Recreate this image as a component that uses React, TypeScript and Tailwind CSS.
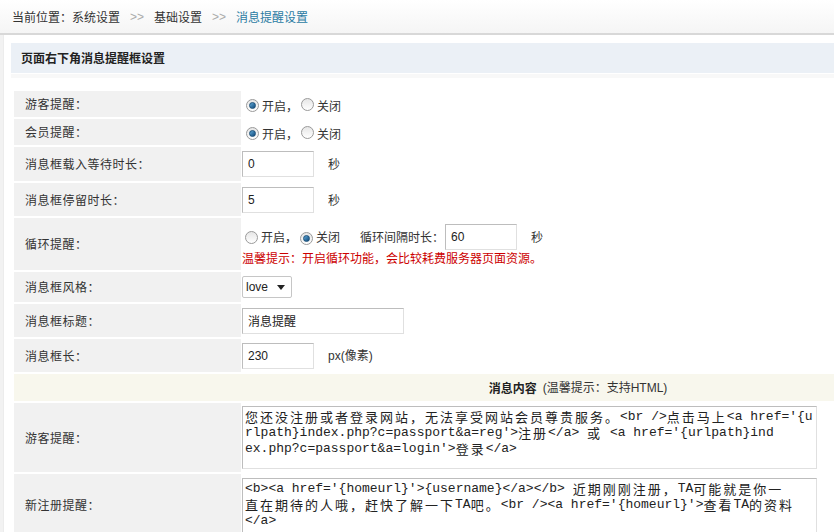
import type { ReactNode } from 'react'

const CJK = /([\u3000-\u303f\u4e00-\u9fff\uff00-\uffef]+)/

function Mixed({ text }: { text: string }) {
  return (
    <>
      {text.split(CJK).map((part, i) =>
        i % 2 ? (
          <span key={i} className="inline-block align-top h-[16px] text-[13px] tracking-[2px] leading-[16px] font-['Noto_Sans_CJK_SC',sans-serif]">
            {part}
          </span>
        ) : (
          <span key={i} className="inline-block align-top h-[16px] leading-[16px] whitespace-pre">
            {part}
          </span>
        )
      )}
    </>
  )
}

function Radio({ checked }: { checked?: boolean }) {
  return (
    <span className="inline-flex w-[13px] h-[13px] rounded-full border border-[#9a9a9a] bg-gradient-to-b from-[#e6e6e6] to-[#ffffff] items-center justify-center shrink-0">
      {checked && (
        <span className="w-[7px] h-[7px] rounded-full bg-gradient-to-br from-[#5fa8d8] to-[#0d4a7a] border border-[#1a4f78]" />
      )}
    </span>
  )
}

function TextBox({ value, className }: { value: string; className: string }) {
  return (
    <div
      className={`h-[26px] border border-[#bdbdbd] border-r-[#e0e0e0] border-b-[#e0e0e0] bg-white flex items-center px-[5px] text-[12px] text-[#222] font-['Liberation_Sans',sans-serif] ${className}`}
    >
      {value}
    </div>
  )
}

function Row({ label, h, children, top }: { label: string; h: string; children: ReactNode; top?: boolean }) {
  return (
    <div className={`flex ${h}`}>
      <div className="w-[227px] shrink-0 bg-[#f1f1f1] flex items-center pl-[11px] text-[12px] tracking-[0.5px] text-[#333]">
        {label}
      </div>
      <div className={`flex-1 flex ${top ? 'flex-col' : 'items-center'} pl-[1px] text-[12px] text-[#333]`}>
        {children}
      </div>
    </div>
  )
}

function OnOff({ on }: { on: boolean }) {
  return (
    <div className="flex items-center pl-[4px] pt-[3px]">
      <Radio checked={on} />
      <span className="ml-[3px]">开启，</span>
      <span className="ml-[3px]">
        <Radio checked={!on} />
      </span>
      <span className="ml-[3px]">关闭</span>
    </div>
  )
}

function Textarea({ lines, className }: { lines: string[]; className: string }) {
  return (
    <div
      className={`w-[575px] border border-[#bdbdbd] border-r-[#e0e0e0] border-b-[#e0e0e0] bg-white pt-[2px] pl-[2px] text-[13px] leading-[16px] text-[#222] font-['Liberation_Mono','Noto_Sans_CJK_SC',monospace] overflow-hidden ${className}`}
    >
      {lines.map((line, i) => (
        <div key={i} className="whitespace-nowrap h-[16px] leading-[16px]">
          <Mixed text={line} />
        </div>
      ))}
    </div>
  )
}

export default function App() {
  return (
    <div className="w-[834px] h-[532px] overflow-hidden bg-white font-['Noto_Sans_CJK_SC',sans-serif]">
      <div className="h-[35px] bg-gradient-to-b from-white to-[#f5f5f5] border-b-2 border-[#d8d8d8] flex items-center pl-[12px] text-[12px] text-[#333] w-[1200px]">
        <span>当前位置：系统设置</span>
        <span className="mx-[10px] text-[#aaa] font-['Liberation_Sans',sans-serif]">&gt;&gt;</span>
        <span>基础设置</span>
        <span className="mx-[10px] text-[#aaa] font-['Liberation_Sans',sans-serif]">&gt;&gt;</span>
        <span className="text-[#2a7ba3]">消息提醒设置</span>
      </div>

      <div className="flex w-[1200px]">
        <div className="w-[4px] bg-[#f2f2f2] border-r border-[#ececec] h-[500px] shrink-0" />
        <div className="flex-1 pl-[7px] pt-[8px]">
          <div className="h-[30px] bg-[#ebf0f6] flex items-center pl-[10px] text-[12px] font-bold text-[#222]">
            页面右下角消息提醒框设置
          </div>
          <div className="h-[4px] bg-[#f8f8f8] mt-[1px]" />

          <div className="ml-[3px] mt-[13px] w-[1128px] flex flex-col gap-[2px]">
            <Row label="游客提醒：" h="h-[26px]">
              <OnOff on />
            </Row>
            <Row label="会员提醒：" h="h-[26px]">
              <OnOff on />
            </Row>
            <Row label="消息框载入等待时长：" h="h-[34px]">
              <TextBox value="0" className="w-[72px]" />
              <span className="ml-[14px]">秒</span>
            </Row>
            <Row label="消息框停留时长：" h="h-[33px]">
              <TextBox value="5" className="w-[72px]" />
              <span className="ml-[14px]">秒</span>
            </Row>
            <Row label="循环提醒：" h="h-[52px]" top>
              <div className="flex items-center mt-[6px]">
                <div className="flex items-center pl-[3px]">
                  <Radio />
                  <span className="ml-[3px]">开启，</span>
                  <span className="ml-[3px]">
                    <Radio checked />
                  </span>
                  <span className="ml-[3px]">关闭</span>
                </div>
                <span className="ml-[20px]">循环间隔时长：</span>
                <TextBox value="60" className="w-[72px] ml-[1px]" />
                <span className="ml-[14px]">秒</span>
              </div>
              <div className="text-[#cc0000] mt-[1px] leading-[14px]">温馨提示：开启循环功能，会比较耗费服务器页面资源。</div>
            </Row>
            <Row label="消息框风格：" h="h-[30px]">
              <div className="w-[50px] h-[22px] border border-[#c6c6c6] rounded-[2px] bg-white flex items-center pl-[3px] text-[12px] text-[#222] font-['Liberation_Sans',sans-serif]">
                <span className="flex-1">love</span>
                <svg width="8" height="5" viewBox="0 0 8 5" className="mr-[6px]">
                  <path d="M0 0 L8 0 L4 5 Z" fill="#222" />
                </svg>
              </div>
            </Row>
            <Row label="消息框标题：" h="h-[33px]">
              <TextBox value="消息提醒" className="w-[162px] font-['Noto_Sans_CJK_SC',sans-serif]" />
            </Row>
            <Row label="消息框长：" h="h-[33px]">
              <TextBox value="230" className="w-[72px]" />
              <span className="ml-[14px]">
                <span className="font-['Liberation_Sans',sans-serif]">px(</span>像素<span className="font-['Liberation_Sans',sans-serif]">)</span>
              </span>
            </Row>
            <div className="h-[27px] bg-[#f8f7ed] flex items-center justify-center text-[12px] text-[#333]">
              <span className="font-bold text-[#222]">消息内容</span>
              <span className="ml-[6px]">
                <span className="font-['Liberation_Sans',sans-serif]">(</span>温馨提示：支持<span className="font-['Liberation_Sans',sans-serif]">HTML)</span>
              </span>
            </div>
            <Row label="游客提醒：" h="h-[69px]">
              <Textarea
                className="h-[63px]"
                lines={[
                  "您还没注册或者登录网站，无法享受网站会员尊贵服务。<br />点击马上<a href='{u",
                  "rlpath}index.php?c=passport&a=reg'>注册</a> 或 <a href='{urlpath}ind",
                  "ex.php?c=passport&a=login'>登录</a>",
                ]}
              />
            </Row>
            <Row label="新注册提醒：" h="h-[62px]" top>
              <Textarea
                className="h-[60px] mt-[4px]"
                lines={[
                  "<b><a href='{homeurl}'>{username}</a></b> 近期刚刚注册，TA可能就是你一",
                  "直在期待的人哦，赶快了解一下TA吧。<br /><a href='{homeurl}'>查看TA的资料",
                  '</a>',
                ]}
              />
            </Row>
          </div>
        </div>
      </div>
    </div>
  )
}
